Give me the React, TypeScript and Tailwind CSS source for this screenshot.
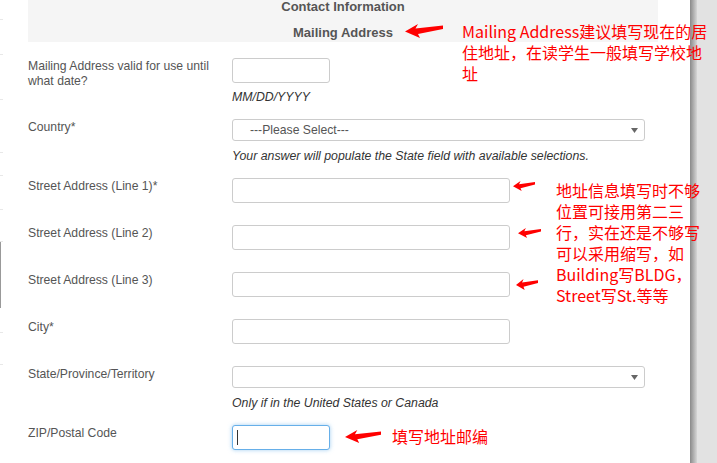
import type { ReactNode } from 'react'

const LABEL_FONT = "font-['Liberation_Sans',Arial,sans-serif]"
const NOTE_FONT = "font-['Noto_Sans_CJK_SC','Noto_Sans',sans-serif]"

function Arrow({ w, h, className }: { w: number; h: number; className: string }) {
  return (
    <svg width={w} height={h} viewBox="0 0 38 14" preserveAspectRatio="none" className={`absolute ${className}`}>
      <polygon points="0,7.5 13,0 10.5,4.5 38,1.5 38,5 13,10 15,14" fill="#ff0000" />
    </svg>
  )
}

function TextBox({ width, focused }: { width: string; focused?: boolean }) {
  return (
    <div
      className={`h-[25px] ${width} rounded-[3px] border bg-white ${
        focused ? 'relative border-[#66afe9] shadow-[0_0_4px_rgba(102,175,233,0.6)]' : 'border-[#cccccc]'
      }`}
    >
      {focused && <div className="absolute left-[4px] top-[4px] h-[15px] w-px bg-[#333]" />}
    </div>
  )
}

function SelectBox({ text }: { text?: string }) {
  return (
    <div className="flex h-[22px] w-[413px] items-center justify-between rounded-[3px] border border-[#cccccc] bg-white pl-[17px] pr-[6px] text-[12.2px] text-[#555]">
      <span className="leading-none">{text}</span>
      <svg width="7" height="5" viewBox="0 0 7 5">
        <polygon points="0,0 7,0 3.5,5" fill="#666" />
      </svg>
    </div>
  )
}

function Help({ children, mt }: { children: ReactNode; mt: string }) {
  return <div className={`${mt} text-[12.3px] italic leading-[14px] text-[#333]`}>{children}</div>
}

function Row({ label, children, mt }: { label: ReactNode; children: ReactNode; mt: string }) {
  return (
    <div className={`flex items-start ${mt}`}>
      <div className="w-[204px] shrink-0 pr-[12px] pt-px text-[12.2px] leading-[15px] text-[#555]">{label}</div>
      <div className="flex flex-col">{children}</div>
    </div>
  )
}

export default function App() {
  return (
    <div className={`relative flex h-[463px] w-[717px] overflow-hidden bg-white ${LABEL_FONT}`}>
      {/* left strip */}
      <div className="flex w-[3px] shrink-0 flex-col">
        <div className="h-[20px] border-b border-[#e8e8e8]" />
        <div className="h-[35px] border-b border-[#e8e8e8]" />
        <div className="h-[45px] border-b border-[#e8e8e8]" />
        <div className="h-[53px] border-b border-[#e8e8e8]" />
        <div className="h-[23px] border-b border-[#e8e8e8]" />
        <div className="h-[34px] border-b border-[#e8e8e8]" />
        <div className="h-[32px] border-b border-[#e8e8e8]" />
        <div className="h-[33px] border-l border-[#999]" />
        <div className="h-[33px] border-l border-[#999]" />
        <div className="h-[25px] border-b border-[#e8e8e8]" />
        <div className="h-[32px] border-b border-[#e8e8e8]" />
      </div>

      {/* page content */}
      <div className="w-[687px] shrink-0 pl-[25px]">
        <div className="flex h-[42px] w-[630px] flex-col items-center bg-[#f5f5f5] text-[13px] font-bold text-[#555]">
          <div className="leading-[14px]">Contact Information</div>
          <div className="mt-[12px] leading-[14px]">Mailing Address</div>
        </div>

        <Row mt="mt-[16px]" label={<>Mailing Address valid for use until<br />what date?</>}>
          <TextBox width="w-[98px]" />
          <Help mt="mt-[7px]">MM/DD/YYYY</Help>
        </Row>

        <Row mt="mt-[15px]" label="Country*">
          <SelectBox text="---Please Select---" />
          <Help mt="mt-[8px]">Your answer will populate the State field with available selections.</Help>
        </Row>

        <Row mt="mt-[15px]" label="Street Address (Line 1)*">
          <TextBox width="w-[278px]" />
        </Row>
        <Row mt="mt-[22px]" label="Street Address (Line 2)">
          <TextBox width="w-[278px]" />
        </Row>
        <Row mt="mt-[22px]" label="Street Address (Line 3)">
          <TextBox width="w-[278px]" />
        </Row>
        <Row mt="mt-[22px]" label="City*">
          <TextBox width="w-[278px]" />
        </Row>

        <Row mt="mt-[22px]" label="State/Province/Territory">
          <SelectBox />
          <Help mt="mt-[8px]">Only if in the United States or Canada</Help>
        </Row>

        <Row mt="mt-[15px]" label="ZIP/Postal Code">
          <TextBox width="w-[98px]" focused />
        </Row>
      </div>

      {/* window edge */}
      <div className="w-[7px] shrink-0 bg-gradient-to-r from-[#8a8a8a] to-[#d6d6d6]" />
      <div className="flex-1 bg-[#e2e2e2]" />

      {/* annotations */}
      <Arrow w={38} h={14} className="left-[405px] top-[24px]" />
      <div className={`absolute left-[462px] top-[21px] whitespace-nowrap text-[16px] leading-[21px] text-[#ff0000] ${NOTE_FONT}`}>
        Mailing Address建议填写现在的居<br />住地址，在读学生一般填写学校地<br />址
      </div>

      <Arrow w={22} h={10} className="left-[513px] top-[181px]" />
      <Arrow w={23} h={10} className="left-[518px] top-[228px]" />
      <Arrow w={22} h={11} className="left-[516px] top-[279px]" />
      <div className={`absolute left-[556px] top-[180px] whitespace-nowrap text-[16px] leading-[21px] text-[#ff0000] ${NOTE_FONT}`}>
        地址信息填写时不够<br />位置可接用第二三<br />行，实在还是不够写<br />可以采用缩写，如<br />Building写BLDG，<br />Street写St.等等
      </div>

      <Arrow w={36} h={13} className="left-[345px] top-[430px]" />
      <div className={`absolute left-[392px] top-[426px] whitespace-nowrap text-[16px] leading-[21px] text-[#ff0000] ${NOTE_FONT}`}>
        填写地址邮编
      </div>
    </div>
  )
}
